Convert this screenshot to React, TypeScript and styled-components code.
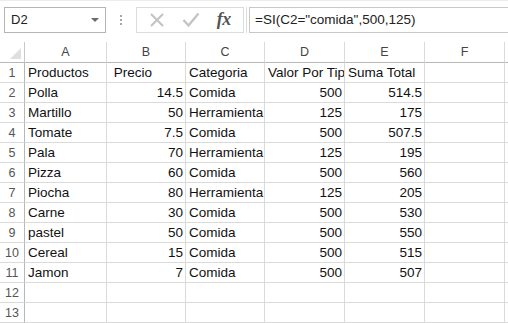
import React from "react";
import styled, { createGlobalStyle } from "styled-components";

const Global = createGlobalStyle`
  html, body { margin: 0; padding: 0; background: #ffffff; }
  body { font-family: "Liberation Sans", Arial, sans-serif; overflow: hidden; }
  #root { width: 508px; height: 323px; overflow: hidden; }
`;

const Page = styled.div`
  width: 508px;
  height: 323px;
  display: flex;
  flex-direction: column;
  background: #fff;
`;

const TopBar = styled.div`
  display: flex;
  align-items: center;
  height: 38px;
  padding: 0 0 0 4px;
  box-sizing: border-box;
  border-top: 1px solid #ececec;
`;

const NameBox = styled.div`
  width: 102px;
  height: 26px;
  box-sizing: border-box;
  border: 1px solid #b5b5b5;
  display: flex;
  align-items: center;
  justify-content: space-between;
  padding: 0 6px 0 6px;
  font-size: 13px;
  color: #222;
`;

const Arrow = styled.span`
  width: 0;
  height: 0;
  border-left: 4px solid transparent;
  border-right: 4px solid transparent;
  border-top: 4px solid #6a6a6a;
`;

const Dots = styled.div`
  width: 30px;
  display: flex;
  flex-direction: column;
  align-items: center;
  gap: 2px;
  span { width: 2px; height: 2px; background: #a8a8a8; display: block; }
`;

const Buttons = styled.div`
  width: 108px;
  height: 26px;
  box-sizing: border-box;
  border: 1px solid #dcdcdc;
  display: flex;
  align-items: center;
  justify-content: space-around;
  padding: 0 4px;
`;

const Fx = styled.span`
  font-family: "Liberation Serif", "Times New Roman", serif;
  font-style: italic;
  font-weight: bold;
  font-size: 18px;
  color: #555;
  letter-spacing: -0.5px;
`;

const Separator = styled.div`
  width: 1px;
  height: 26px;
  background: #dcdcdc;
  margin: 0 2px 0 2px;
`;

const Formula = styled.div`
  flex: 1;
  height: 26px;
  box-sizing: border-box;
  border: 1px solid #c8c8c8;
  border-right: none;
  display: flex;
  align-items: center;
  padding-left: 5px;
  font-size: 13.5px;
  color: #222;
`;

const Sheet = styled.div`
  margin-top: 4px;
  display: grid;
  grid-template-columns: 25px 82px 79px 79px 80px 80px 80px 1fr;
  grid-auto-rows: 20px;
  grid-template-rows: 21px;
`;

const Corner = styled.div`
  box-sizing: border-box;
  border-right: 1px solid #c9c9c9;
  border-bottom: 1px solid #b8b8b8;
  position: relative;
  &::after {
    content: "";
    position: absolute;
    right: 3px;
    bottom: 3px;
    width: 0;
    height: 0;
    border-left: 11px solid transparent;
    border-bottom: 11px solid #dfdfdf;
  }
`;

const ColHead = styled.div`
  box-sizing: border-box;
  border-right: 1px solid #dadada;
  border-bottom: 1px solid #b8b8b8;
  display: flex;
  align-items: center;
  justify-content: center;
  font-size: 12.5px;
  color: #444;
`;

const RowHead = styled.div`
  box-sizing: border-box;
  border-right: 1px solid #b8b8b8;
  border-bottom: 1px solid #dadada;
  display: flex;
  align-items: center;
  justify-content: center;
  font-size: 12.5px;
  color: #555;
`;

const Cell = styled.div<{ $right?: boolean }>`
  box-sizing: border-box;
  border-right: 1px solid #dadada;
  border-bottom: 1px solid #dadada;
  display: flex;
  align-items: center;
  justify-content: ${(p) => (p.$right ? "flex-end" : "flex-start")};
  padding: 0 2px 0 3px;
  font-size: 13.5px;
  color: #111;
  white-space: pre;
  overflow: hidden;
`;

const cols = ["A", "B", "C", "D", "E", "F", ""];

type Row = [string, string | number, string, string | number, string | number];

const rows: Row[] = [
  ["Productos", " Precio", "Categoria", "Valor Por Tipo", "Suma Total"],
  ["Polla", 14.5, "Comida", 500, 514.5],
  ["Martillo", 50, "Herramienta", 125, 175],
  ["Tomate", 7.5, "Comida", 500, 507.5],
  ["Pala", 70, "Herramienta", 125, 195],
  ["Pizza", 60, "Comida", 500, 560],
  ["Piocha", 80, "Herramienta", 125, 205],
  ["Carne", 30, "Comida", 500, 530],
  ["pastel", 50, "Comida", 500, 550],
  ["Cereal", 15, "Comida", 500, 515],
  ["Jamon", 7, "Comida", 500, 507],
  ["", "", "", "", ""],
  ["", "", "", "", ""],
];

const XIcon = () => (
  <svg width="16" height="16" viewBox="0 0 16 16">
    <path d="M2 2 L14 14 M14 2 L2 14" stroke="#c4c4c4" strokeWidth="2.2" fill="none" />
  </svg>
);

const CheckIcon = () => (
  <svg width="18" height="16" viewBox="0 0 18 16">
    <path d="M1.5 8 L6.5 13.5 L16.5 1.5" stroke="#c4c4c4" strokeWidth="2.4" fill="none" />
  </svg>
);

export default function App() {
  return (
    <Page>
      <Global />
      <TopBar>
        <NameBox>
          <span>D2</span>
          <Arrow />
        </NameBox>
        <Dots>
          <span />
          <span />
          <span />
        </Dots>
        <Buttons>
          <XIcon />
          <CheckIcon />
          <Fx>fx</Fx>
        </Buttons>
        <Separator />
        <Formula>=SI(C2="comida",500,125)</Formula>
      </TopBar>
      <Sheet>
        <Corner />
        {cols.map((c, i) => (
          <ColHead key={i}>{c}</ColHead>
        ))}
        {rows.map((r, i) => (
          <React.Fragment key={i}>
            <RowHead>{i + 1}</RowHead>
            {r.map((v, j) => (
              <Cell key={j} $right={typeof v === "number"}>
                {v}
              </Cell>
            ))}
            <Cell />
            <Cell />
          </React.Fragment>
        ))}
      </Sheet>
    </Page>
  );
}
